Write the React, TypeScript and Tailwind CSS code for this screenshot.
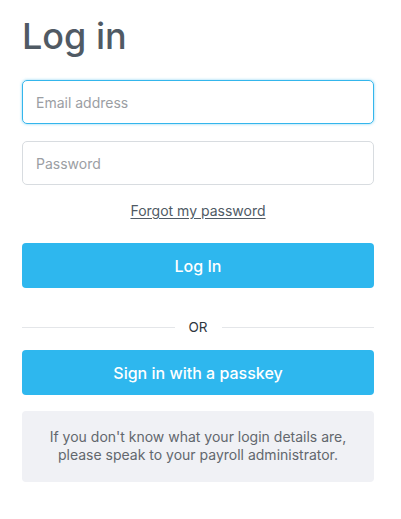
import React from "react";

const App = () => {
  return (
    <div className="min-h-[519px] bg-white font-['Inter',sans-serif]">
      <div className="w-[352px] ml-[22px] pt-[14px]">
        <h1 className="text-[36px] leading-[44px] font-medium text-[#505a64]">
          Log in
        </h1>
        <form className="mt-[22px] flex flex-col">
          <input
            type="email"
            placeholder="Email address"
            className="h-[44px] px-[13px] rounded-[5px] border border-[#34b6ec] shadow-[0_0_3px_rgba(52,182,236,0.6)] text-[14px] text-[#4f5a65] placeholder:text-[#9b9ea3] outline-none"
          />
          <input
            type="password"
            placeholder="Password"
            className="mt-[17px] h-[44px] px-[13px] rounded-[5px] border border-[#d8dce0] text-[14px] text-[#4f5a65] placeholder:text-[#9b9ea3] outline-none"
          />
          <a
            href="#"
            className="mt-[16px] self-center text-[14px] leading-[20px] text-[#4f5a65] underline underline-offset-2"
          >
            Forgot my password
          </a>
          <button
            type="button"
            className="mt-[22px] h-[45px] rounded-[4px] bg-[#2eb7ee] text-white text-[16px] font-medium"
          >
            Log In
          </button>
          <div className="mt-[31px] flex items-center gap-[14px]">
            <div className="flex-1 h-px bg-[#e4e6e9]" />
            <span className="text-[13.5px] leading-[16px] text-[#2e3640]">OR</span>
            <div className="flex-1 h-px bg-[#e4e6e9]" />
          </div>
          <button
            type="button"
            className="mt-[15px] h-[45px] rounded-[4px] bg-[#2eb7ee] text-white text-[16px] font-medium"
          >
            Sign in with a passkey
          </button>
        </form>
        <div className="mt-[16px] rounded-[4px] bg-[#f0f1f5] px-4 pt-[17px] pb-[18px] text-center text-[14px] leading-[18px] text-[#62676d]">
          If you don't know what your login details are,
          <br />
          please speak to your payroll administrator.
        </div>
      </div>
    </div>
  );
};

export default App;
